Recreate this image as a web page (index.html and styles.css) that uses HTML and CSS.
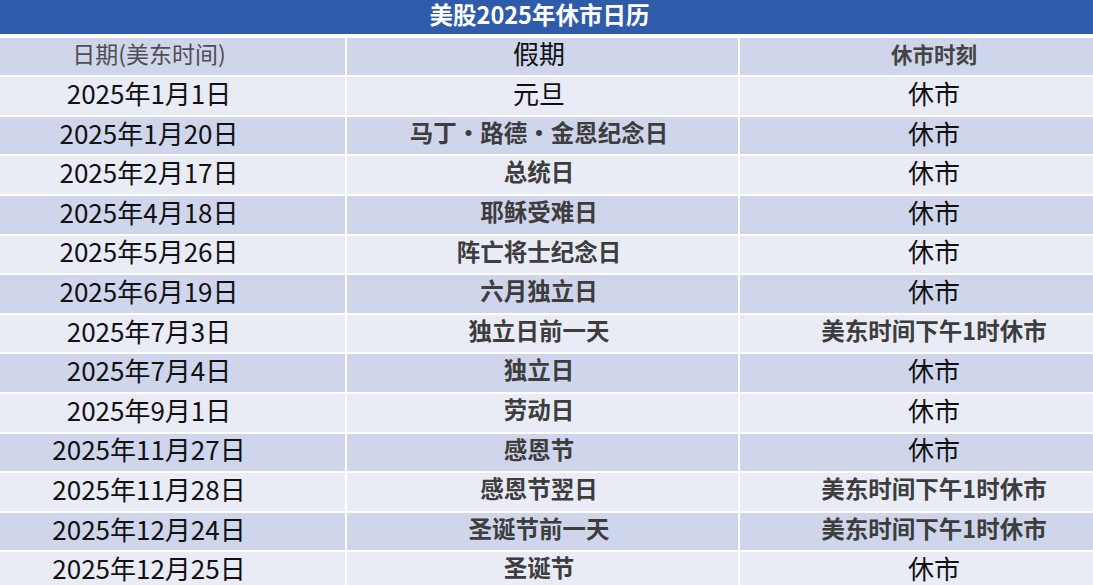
FILE: index.html
```html
<!DOCTYPE html>
<html lang="zh-CN">
<head>
<meta charset="utf-8">
<title>美股2025年休市日历</title>
<link rel="stylesheet" href="styles.css">
</head>
<body>
<div class="page">
  <div class="title">美股2025年休市日历</div>
  <div class="grid">
    <div class="cell c1 dark head">日期(美东时间)</div>
    <div class="cell c2 dark big">假期</div>
    <div class="cell c3 dark head2">休市时刻</div>

    <div class="cell c1 light big">2025年1月1日</div>
    <div class="cell c2 light big">元旦</div>
    <div class="cell c3 light big">休市</div>

    <div class="cell c1 dark big">2025年1月20日</div>
    <div class="cell c2 dark small">马丁·路德·金恩纪念日</div>
    <div class="cell c3 dark big">休市</div>

    <div class="cell c1 light big">2025年2月17日</div>
    <div class="cell c2 light small">总统日</div>
    <div class="cell c3 light big">休市</div>

    <div class="cell c1 dark big">2025年4月18日</div>
    <div class="cell c2 dark small">耶稣受难日</div>
    <div class="cell c3 dark big">休市</div>

    <div class="cell c1 light big">2025年5月26日</div>
    <div class="cell c2 light small">阵亡将士纪念日</div>
    <div class="cell c3 light big">休市</div>

    <div class="cell c1 dark big">2025年6月19日</div>
    <div class="cell c2 dark small">六月独立日</div>
    <div class="cell c3 dark big">休市</div>

    <div class="cell c1 light big">2025年7月3日</div>
    <div class="cell c2 light small">独立日前一天</div>
    <div class="cell c3 light small">美东时间下午1时休市</div>

    <div class="cell c1 dark big">2025年7月4日</div>
    <div class="cell c2 dark small">独立日</div>
    <div class="cell c3 dark big">休市</div>

    <div class="cell c1 light big">2025年9月1日</div>
    <div class="cell c2 light small">劳动日</div>
    <div class="cell c3 light big">休市</div>

    <div class="cell c1 dark big">2025年11月27日</div>
    <div class="cell c2 dark small">感恩节</div>
    <div class="cell c3 dark big">休市</div>

    <div class="cell c1 light big">2025年11月28日</div>
    <div class="cell c2 light small">感恩节翌日</div>
    <div class="cell c3 light small">美东时间下午1时休市</div>

    <div class="cell c1 dark big">2025年12月24日</div>
    <div class="cell c2 dark small">圣诞节前一天</div>
    <div class="cell c3 dark small">美东时间下午1时休市</div>

    <div class="cell c1 light big">2025年12月25日</div>
    <div class="cell c2 light small">圣诞节</div>
    <div class="cell c3 light big">休市</div>
  </div>
</div>
</body>
</html>
```
FILE: styles.css
```css
html, body {
  margin: 0;
  padding: 0;
  background: #ffffff;
}
body {
  font-family: "Noto Sans CJK SC", "Noto Sans", sans-serif;
  overflow: hidden;
}
.page {
  width: 1093px;
  height: 585px;
  overflow: hidden;
}
.title {
  box-sizing: border-box;
  height: 34px;
  background: #2f5bab;
  color: #ffffff;
  font-size: 23.5px;
  font-weight: 700;
  line-height: 1;
  display: flex;
  align-items: center;
  justify-content: center;
  padding: 0 14px 4px 0;
  margin-bottom: 3.6px;
}
.grid {
  display: grid;
  grid-template-columns: 345px 391px 1fr;
  grid-auto-rows: 37.6px;
  column-gap: 2px;
  row-gap: 2px;
}
.cell {
  display: flex;
  align-items: center;
  justify-content: center;
  white-space: nowrap;
  padding-bottom: 6px;
  line-height: 1;
}
.c1 { padding-right: 47px; }
.c2 { padding-right: 7px; }
.c3 { padding-left: 35px; }
.dark { background: #cfd5ea; }
.light { background: #e9ebf5; }
.big {
  font-size: 26px;
  color: #111111;
  font-weight: 400;
}
.small {
  font-size: 23.5px;
  color: #3d3d3d;
  font-weight: 700;
}
.head {
  font-size: 23px;
  color: #4f4f4f;
  font-weight: 400;
}
.head2 {
  font-size: 21.5px;
  color: #444444;
  font-weight: 700;
}
```
